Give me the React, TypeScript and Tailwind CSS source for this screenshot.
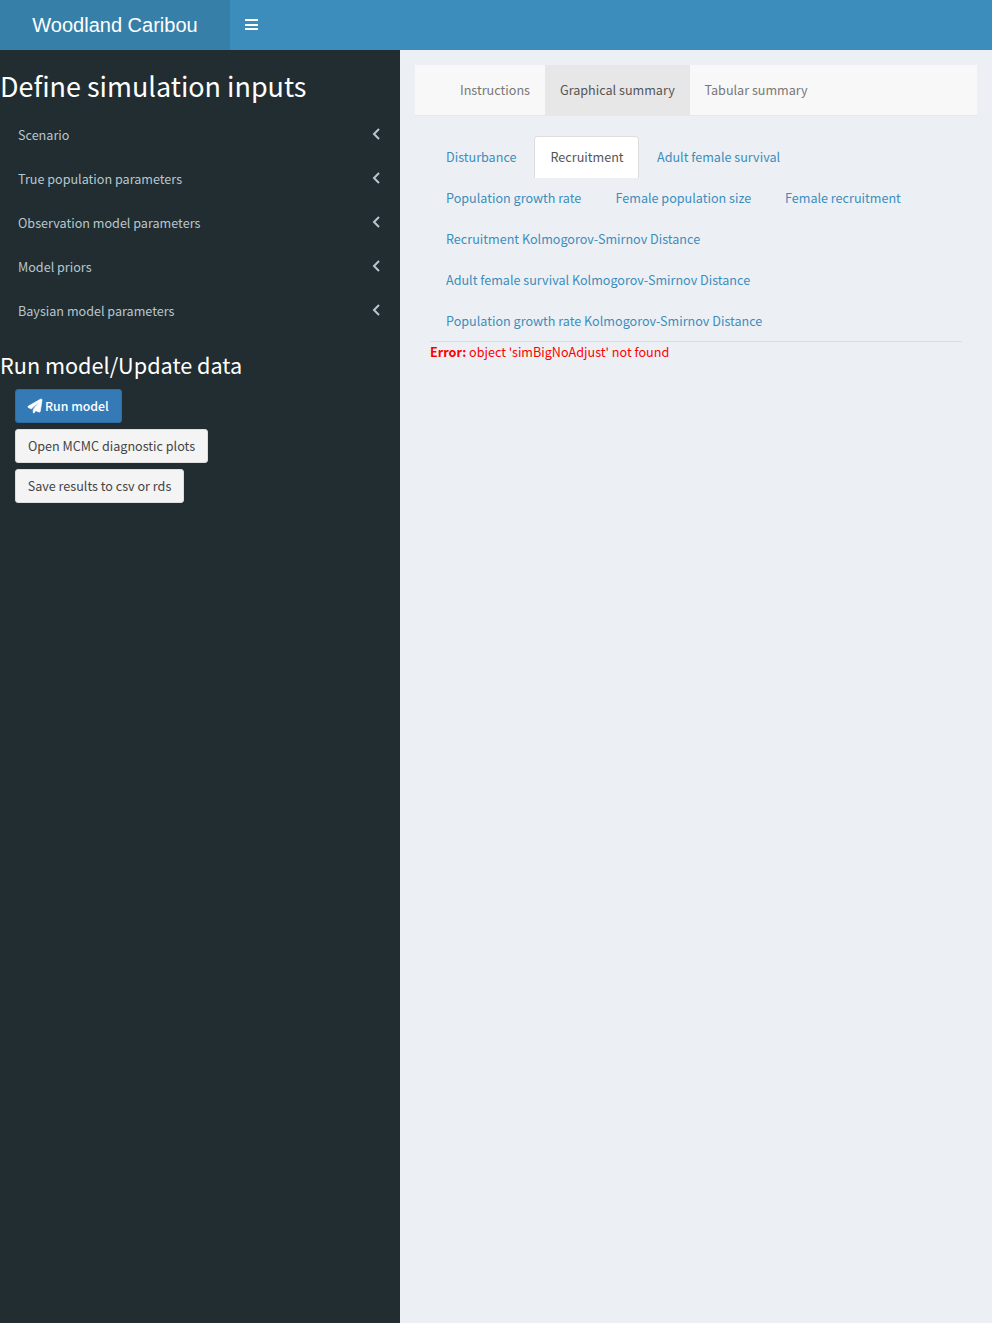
const menuItems = [
  "Scenario",
  "True population parameters",
  "Observation model parameters",
  "Model priors",
  "Baysian model parameters",
];

const plotTabs = [
  { label: "Disturbance", width: "w-[102px]" },
  { label: "Recruitment", width: "w-[105px]", active: true },
  { label: "Adult female survival", width: "w-[155px]" },
  { label: "Population growth rate", width: "w-[167.5px]" },
  { label: "Female population size", width: "w-[167.5px]" },
  { label: "Female recruitment", width: "w-[148px]" },
  { label: "Recruitment Kolmogorov-Smirnov Distance", width: "w-[286px]" },
  { label: "Adult female survival Kolmogorov-Smirnov Distance", width: "w-[336px]" },
  { label: "Population growth rate Kolmogorov-Smirnov Distance", width: "w-[348px]" },
];

function ChevronLeft() {
  return (
    <svg viewBox="0 0 8 12" className="mr-4 mt-[3px] h-3 w-2" fill="none" stroke="currentColor" strokeWidth="2">
      <path d="M7 1 L2 6 L7 11" />
    </svg>
  );
}

function Bars() {
  return (
    <svg viewBox="0 0 13 12" className="h-3 w-[13px]" fill="currentColor">
      <rect x="0" y="0" width="13" height="2" rx="0.5" />
      <rect x="0" y="5" width="13" height="2" rx="0.5" />
      <rect x="0" y="9" width="13" height="2" rx="0.5" />
    </svg>
  );
}

function PaperPlane() {
  return (
    <svg
      viewBox="0 0 512 512"
      className="h-[14px] w-[14px] shrink-0 overflow-visible"
      fill="currentColor"
      stroke="currentColor"
      strokeWidth="26"
      strokeLinejoin="round"
    >
      <path d="M511.6 36.86l-64 415.1c-1.5 9.734-7.375 18.22-15.97 23.05c-4.844 2.719-10.27 4.097-15.68 4.097c-4.188 0-8.319-.8154-12.29-2.472l-122.6-51.1l-50.86 76.29C226.3 508.5 219.8 512 212.8 512C201.3 512 192 502.7 192 491.2v-96.18c0-7.115 2.372-14.03 6.742-19.64L416 96l-293.7 264.3L19.69 317.5C8.438 312.8 .8125 302.2 .0625 289.1s5.469-23.72 16.06-29.77l448-255.1c10.69-6.109 23.88-5.547 34 1.406S513.5 24.72 511.6 36.86z" />
    </svg>
  );
}

function Header() {
  return (
    <header className="flex h-[50px] bg-[#3c8dbc] text-white">
      <div className="w-[230px] bg-[#367fa9] text-center font-['Liberation_Sans',sans-serif] text-[20px] leading-[50px]">
        Woodland Caribou
      </div>
      <button className="flex items-center px-[15px]" aria-label="Toggle navigation">
        <Bars />
      </button>
    </header>
  );
}

function Sidebar() {
  return (
    <aside className="w-[400px] shrink-0 bg-[#222d32] pt-[19px]">
      <h2 className="text-[26.95px] leading-[33px] text-white">Define simulation inputs</h2>
      <ul className="mt-[11px] text-[#b8c7ce]">
        {menuItems.map((item) => (
          <li key={item} className="flex h-11 justify-between py-3 pl-[18px] pr-1">
            <span>{item}</span>
            <ChevronLeft />
          </li>
        ))}
      </ul>
      <h3 className="mt-[19px] text-[21.65px] leading-[26px] text-white">Run model/Update data</h3>
      <div className="mt-[11px] flex flex-col items-start gap-[6px] pl-[15px]">
        <button className="flex h-[34px] w-[107px] items-center gap-[3px] whitespace-nowrap rounded-[3px] border border-[#2e6da4] bg-[#337ab7] pl-3 text-[12.3px] font-medium text-white">
          <PaperPlane />
          Run model
        </button>
        <button className="h-[34px] w-[193px] whitespace-nowrap rounded-[3px] border border-[#ddd] bg-[#f4f4f4] text-[#444]">
          Open MCMC diagnostic plots
        </button>
        <button className="h-[34px] w-[169px] whitespace-nowrap rounded-[3px] border border-[#ddd] bg-[#f4f4f4] text-[#444]">
          Save results to csv or rds
        </button>
      </div>
    </aside>
  );
}

function Content() {
  return (
    <main className="flex-1 p-[15px]">
      <nav className="flex h-[51px] border-b border-[#e7e7e7] bg-[#f8f8f8] pl-[30px] leading-[50px] text-[#777]">
        <span className="w-[100px] pl-[15px]">Instructions</span>
        <span className="h-[51px] w-[145px] bg-[#e7e7e7] pl-[15px] text-[#555]">Graphical summary</span>
        <span className="pl-[14.5px]">Tabular summary</span>
      </nav>
      <section className="mt-5 px-[15px]">
        <ul className="flex flex-wrap border-b border-[#ddd] text-[#3c8dbc]">
          {plotTabs.map(({ label, width, active }) => (
            <li
              key={label}
              className={`${width} mr-[2px] -mb-px h-[42px] whitespace-nowrap rounded-t-[4px] border py-[10px] ${
                active
                  ? "border-[#ddd] border-b-0 bg-white pl-[15.5px] text-[#555]"
                  : "border-transparent pl-[15px]"
              }`}
            >
              {label}
            </li>
          ))}
        </ul>
        <p className="text-[#f00]">
          <b className="font-bold">Error:</b> object 'simBigNoAdjust' not found
        </p>
      </section>
    </main>
  );
}

export default function App() {
  return (
    <div className="flex min-h-screen flex-col bg-[#ecf0f5] font-['Noto_Sans_CJK_SC',sans-serif] text-[12.6px] leading-5">
      <Header />
      <div className="flex flex-1">
        <Sidebar />
        <Content />
      </div>
    </div>
  );
}
